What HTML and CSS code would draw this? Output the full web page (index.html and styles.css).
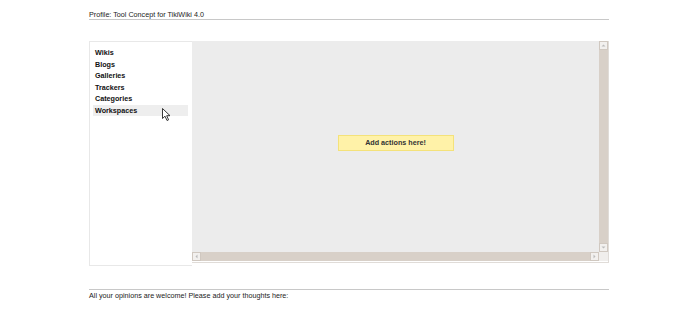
FILE: index.html
```html
<!DOCTYPE html>
<html>
<head>
<meta charset="utf-8">
<link rel="stylesheet" href="styles.css">
</head>
<body>
<div class="page">
  <div class="title">Profile: Tool Concept for TikiWiki 4.0</div>
  <div class="workspace">
    <div class="menu">
      <div class="item">Wikis</div>
      <div class="item">Blogs</div>
      <div class="item">Galleries</div>
      <div class="item">Trackers</div>
      <div class="item">Categories</div>
      <div class="item active">Workspaces</div>
      <svg class="cursor" width="10" height="14" viewBox="0 0 10 14"><path d="M0.5 0.5 L0.5 10.5 L3 8.2 L5 12.5 L6.6 11.8 L4.7 7.7 L8 7.7 Z" fill="#fff" stroke="#222" stroke-width="0.9"/></svg>
    </div>
    <div class="viewer">
      <div class="canvas">
        <div class="actions">Add actions here!</div>
      </div>
      <div class="vscroll">
        <div class="sbtn up"><svg width="7" height="7" viewBox="0 0 7 7"><path d="M1.5 4.5 L3.5 2.5 L5.5 4.5 Z" fill="#bbb"/></svg></div>
        <div class="track"></div>
        <div class="sbtn down"><svg width="7" height="7" viewBox="0 0 7 7"><path d="M1.5 2.5 L3.5 4.5 L5.5 2.5 Z" fill="#bbb"/></svg></div>
      </div>
      <div class="hscroll">
        <div class="sbtn left"><svg width="7" height="7" viewBox="0 0 7 7"><path d="M4.5 1.5 L2.5 3.5 L4.5 5.5 Z" fill="#bbb"/></svg></div>
        <div class="track"></div>
        <div class="sbtn right"><svg width="7" height="7" viewBox="0 0 7 7"><path d="M2.5 1.5 L4.5 3.5 L2.5 5.5 Z" fill="#bbb"/></svg></div>
      </div>
      <div class="corner"></div>
    </div>
  </div>
  <div class="footer">All your opinions are welcome! Please add your thoughts here:</div>
</div>
</body>
</html>
```

FILE: styles.css
```css
html, body {
  margin: 0;
  padding: 0;
  background: #fff;
}
body {
  font-family: "Liberation Sans", Arial, sans-serif;
  font-size: 7.2px;
  color: #222;
}
.page {
  width: 520px;
  margin-left: 89px;
  padding-top: 10px;
}
.title {
  line-height: 9px;
  border-bottom: 1px solid #c8c8c8;
  height: 9px;
}
.workspace {
  margin-top: 21px;
  display: flex;
  align-items: flex-start;
}
.menu {
  position: relative;
  border: 1px solid #e8e8e8;
  border-right: none;
  background: #fff;
  padding: 5px 0 0 3px;
  box-sizing: border-box;
  height: 225px;
  width: 104px;
}
.item {
  font-weight: bold;
  color: #111;
  line-height: 11.5px;
  height: 11.5px;
  padding-left: 2px;
  width: 93px;
}
.item.active {
  background: #eeeeee;
}
.cursor {
  position: absolute;
  left: 72px;
  top: 66px;
}
.viewer {
  display: grid;
  grid-template-columns: 407px 9px;
  grid-template-rows: 211px 9px;
  border: 1px solid #e0dcd8;
  border-left: none;
  border-top: none;
  width: 416px;
  height: 221px;
}
.canvas {
  background: #ececec;
  display: flex;
  justify-content: center;
  padding-top: 94px;
  box-sizing: border-box;
}
.actions {
  width: 114px;
  height: 14px;
  background: #fff2a8;
  border: 1px solid #f4e27a;
  text-align: center;
  font-weight: bold;
  line-height: 14px;
  color: #333;
}
.vscroll {
  display: flex;
  flex-direction: column;
  background: #d8d0c8;
}
.hscroll {
  display: flex;
  background: #d8d0c8;
}
.track {
  flex: 1;
}
.sbtn {
  width: 9px;
  height: 9px;
  background: #f2f0ee;
  border: 1px solid #d0c8c0;
  box-sizing: border-box;
  display: flex;
  align-items: center;
  justify-content: center;
}
.sbtn svg {
  display: block;
}
.corner {
  background: #f0eeec;
}
.footer {
  margin-top: 23px;
  border-top: 1px solid #c8c8c8;
  padding-top: 1px;
  line-height: 9px;
  color: #222;
}
```
